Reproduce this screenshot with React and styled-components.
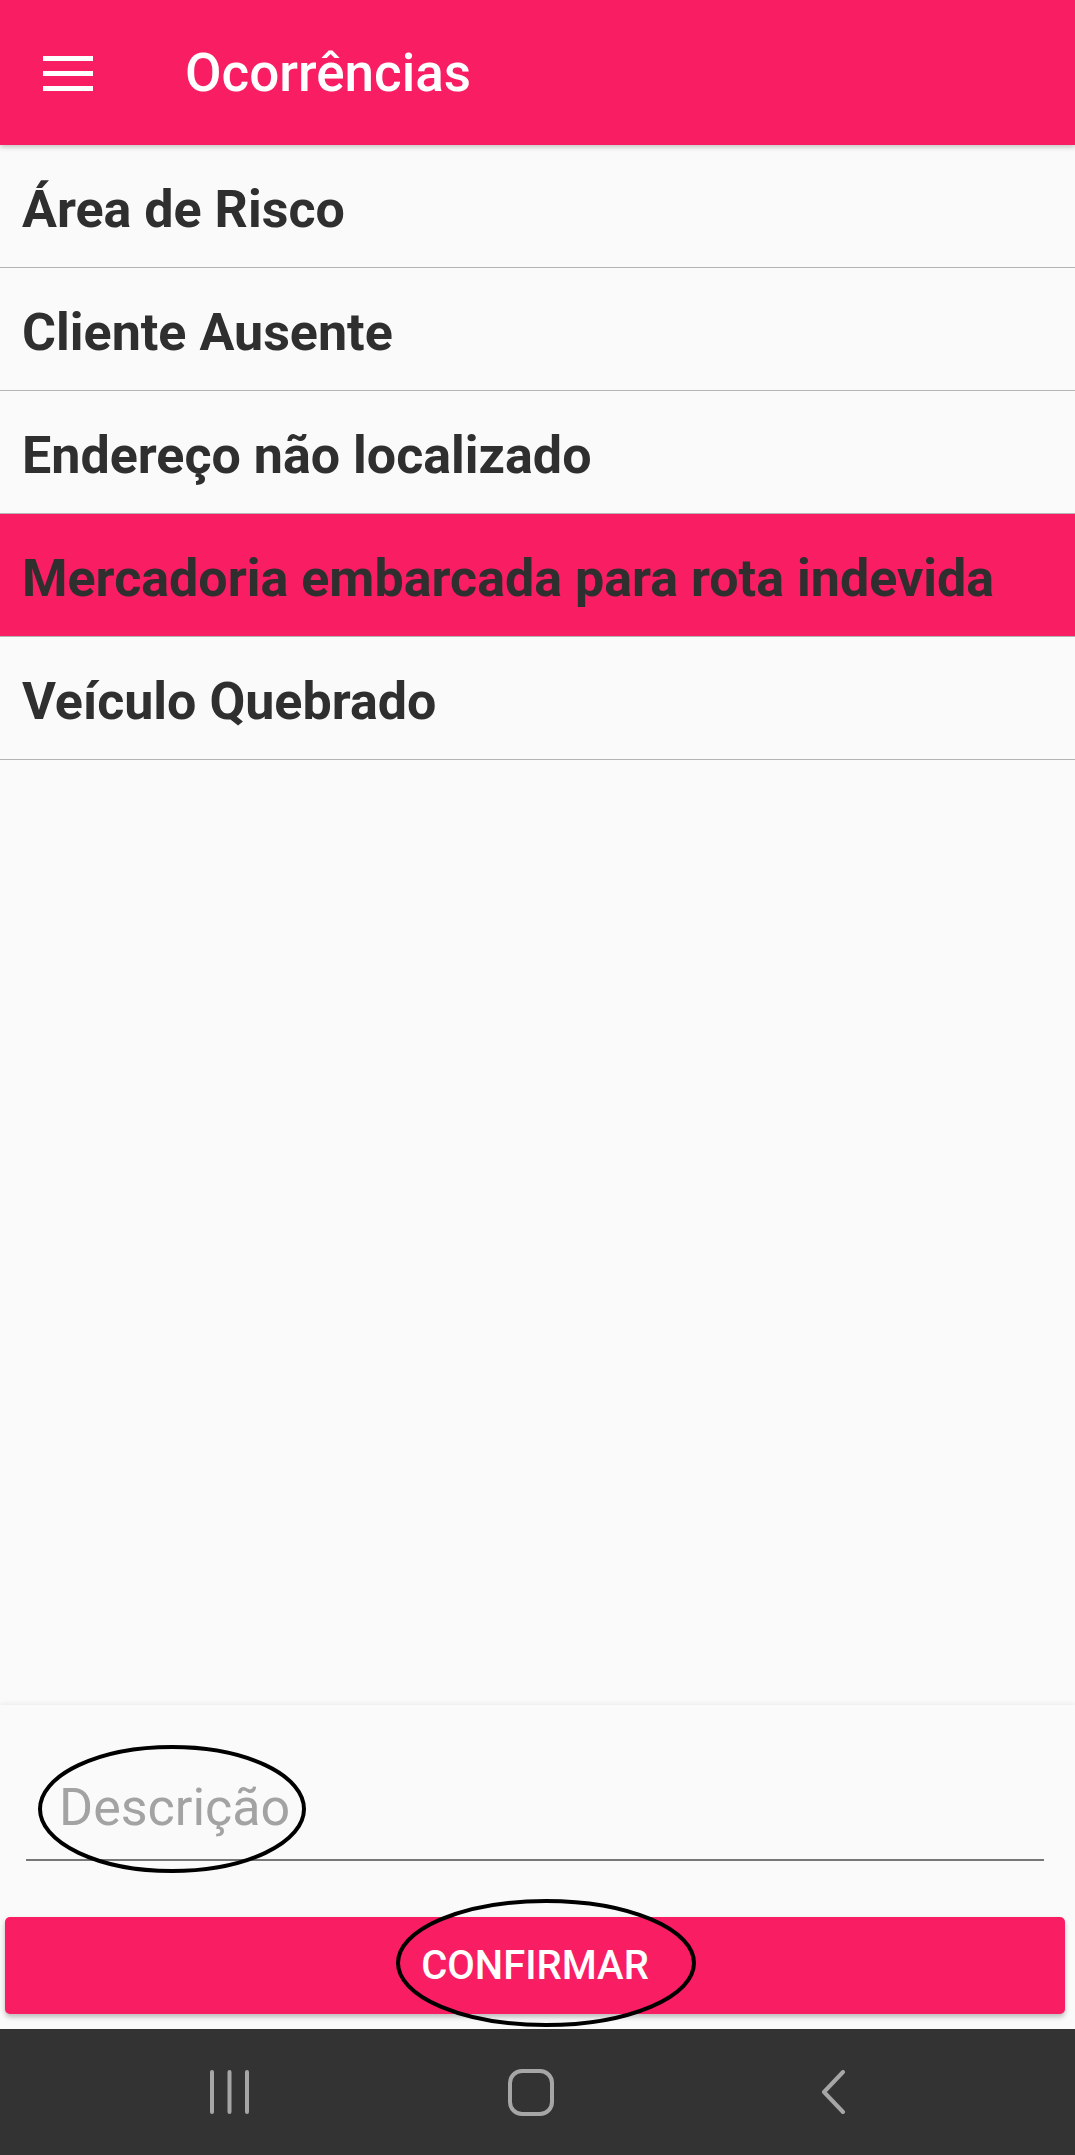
import React from "react";
import styled, { createGlobalStyle } from "styled-components";

const GlobalStyle = createGlobalStyle`
  html, body {
    margin: 0;
    padding: 0;
    background: #fafafa;
  }
  body {
    font-family: Roboto, "Noto Sans", sans-serif;
  }
`;

const PINK = "#f91d64";

const Screen = styled.div`
  width: 1075px;
  height: 2155px;
  display: flex;
  flex-direction: column;
  background: #fafafa;
  position: relative;
  overflow: hidden;
`;

const Toolbar = styled.header`
  height: 145px;
  flex-shrink: 0;
  background: ${PINK};
  display: flex;
  align-items: center;
  padding-left: 43px;
  box-shadow: 0 2px 5px rgba(0, 0, 0, 0.22);
  position: relative;
  z-index: 2;
`;

const MenuButton = styled.div`
  width: 50px;
  height: 36px;
  display: flex;
  margin-top: 2px;
`;

const Title = styled.h1`
  margin: 0 0 0 92px;
  font-size: 53px;
  font-weight: 500;
  color: #ffffff;
`;

const List = styled.ul`
  list-style: none;
  margin: 0;
  padding: 0;
`;

const Item = styled.li`
  box-sizing: border-box;
  height: 123px;
  padding: 34px 0 0 22px;
  font-size: 52px;
  font-weight: 700;
  color: #2f2f2f;
  border-bottom: 1.5px solid #b4b4b4;
  background: ${({ $active }) => ($active ? PINK : "transparent")};
  white-space: nowrap;
`;

const Spacer = styled.div`
  flex: 1;
`;

const BottomPanel = styled.section`
  flex-shrink: 0;
  background: #fafafa;
  box-shadow: 0 -2px 4px rgba(0, 0, 0, 0.05);
  padding: 73px 0 15px;
  position: relative;
`;

const Field = styled.div`
  margin: 0 31px 0 26px;
  padding-bottom: 22px;
  border-bottom: 2px solid #777777;
`;

const Input = styled.input`
  display: block;
  width: 100%;
  box-sizing: border-box;
  height: 59px;
  border: none;
  outline: none;
  background: transparent;
  padding: 0 0 0 33px;
  font-family: Roboto, sans-serif;
  font-size: 52px;
  color: #333;
  &::placeholder {
    color: #a3a3a3;
  }
`;

const ConfirmButton = styled.button`
  display: block;
  box-sizing: border-box;
  width: 1060px;
  height: 97px;
  margin: 56px 0 0 5px;
  border: none;
  border-radius: 5px;
  background: ${PINK};
  color: #ffffff;
  font-family: Roboto, sans-serif;
  font-size: 40px;
  font-weight: 500;
  box-shadow: 0 3px 5px rgba(0, 0, 0, 0.25);
`;

const Annotation = styled.svg`
  position: absolute;
  left: 0;
  top: 0;
  pointer-events: none;
  overflow: visible;
`;

const NavBar = styled.nav`
  height: 126px;
  flex-shrink: 0;
  background: #333333;
  display: grid;
  grid-template-columns: 209px 41px 258px 46px 267px 25px;
  align-items: center;
`;

const NavIcon = styled.svg`
  display: block;
`;

const Hamburger = () => (
  <svg width="50" height="36" viewBox="0 0 50 36">
    <rect x="0" y="0" width="50" height="5" fill="#fff" />
    <rect x="0" y="15" width="50" height="5" fill="#fff" />
    <rect x="0" y="30" width="50" height="5" fill="#fff" />
  </svg>
);

const items = [
  "Área de Risco",
  "Cliente Ausente",
  "Endereço não localizado",
  "Mercadoria embarcada para rota indevida",
  "Veículo Quebrado",
];

export default function App() {
  const selected = 3;
  return (
    <>
      <GlobalStyle />
      <Screen>
        <Toolbar>
          <MenuButton>
            <Hamburger />
          </MenuButton>
          <Title>Ocorrências</Title>
        </Toolbar>
        <List>
          {items.map((label, i) => (
            <Item key={label} $active={i === selected}>
              {label}
            </Item>
          ))}
        </List>
        <Spacer />
        <BottomPanel>
          <Field>
            <Input placeholder="Descrição" />
          </Field>
          <ConfirmButton>CONFIRMAR</ConfirmButton>
          <Annotation width="1075" height="330">
            <ellipse cx="172" cy="104" rx="132" ry="62" fill="none" stroke="#000" strokeWidth="4" />
            <ellipse cx="546" cy="258" rx="148" ry="62" fill="none" stroke="#000" strokeWidth="4" />
          </Annotation>
        </BottomPanel>
        <NavBar>
          <span />
          <NavIcon width="41" height="44" viewBox="0 0 41 44">
            <g stroke="#a6a6a6" strokeWidth="4" strokeLinecap="round">
              <line x1="3" y1="2" x2="3" y2="42" />
              <line x1="20.5" y1="2" x2="20.5" y2="42" />
              <line x1="38" y1="2" x2="38" y2="42" />
            </g>
          </NavIcon>
          <span />
          <NavIcon width="46" height="47" viewBox="0 0 46 47">
            <rect x="2" y="2" width="42" height="43" rx="12" fill="none" stroke="#a6a6a6" strokeWidth="4" />
          </NavIcon>
          <span />
          <NavIcon width="25" height="44" viewBox="0 0 25 44">
            <polyline points="22,2 3,22 22,42" fill="none" stroke="#a6a6a6" strokeWidth="4" strokeLinecap="round" strokeLinejoin="round" />
          </NavIcon>
        </NavBar>
      </Screen>
    </>
  );
}
